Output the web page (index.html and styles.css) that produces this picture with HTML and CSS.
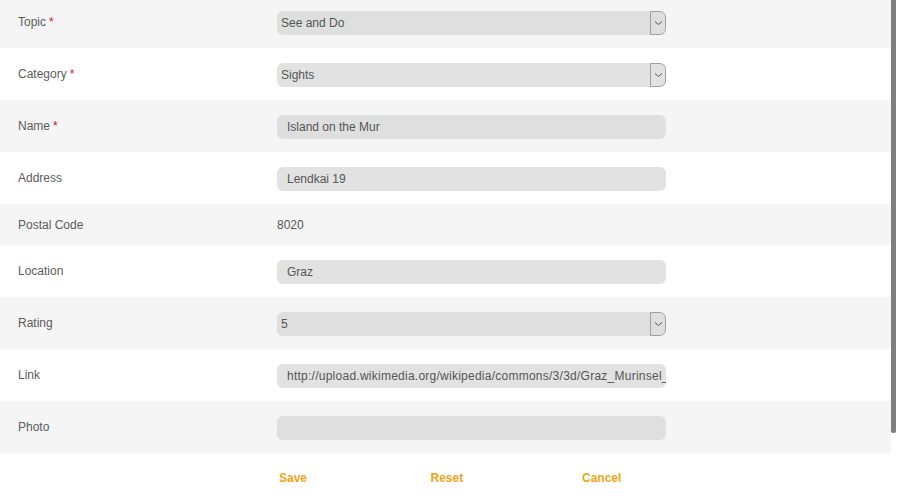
FILE: index.html
```html
<!DOCTYPE html>
<html>
<head>
<meta charset="utf-8">
<link rel="stylesheet" href="styles.css">
</head>
<body>
<div class="page">
  <form class="form">
    <div class="row alt first">
      <div class="label">Topic<span class="req">*</span></div>
      <div class="field select"><span class="val">See and Do</span><span class="arrow"><svg width="9" height="6" viewBox="0 0 9 6"><path d="M1 1.5 L4.5 4.5 L8 1.5" fill="none" stroke="#555" stroke-width="1"/></svg></span></div>
    </div>
    <div class="row">
      <div class="label">Category<span class="req">*</span></div>
      <div class="field select"><span class="val">Sights</span><span class="arrow"><svg width="9" height="6" viewBox="0 0 9 6"><path d="M1 1.5 L4.5 4.5 L8 1.5" fill="none" stroke="#555" stroke-width="1"/></svg></span></div>
    </div>
    <div class="row alt">
      <div class="label">Name<span class="req">*</span></div>
      <div class="field"><span class="val">Island on the Mur</span></div>
    </div>
    <div class="row">
      <div class="label">Address</div>
      <div class="field"><span class="val">Lendkai 19</span></div>
    </div>
    <div class="row alt short">
      <div class="label">Postal Code</div>
      <div class="plain">8020</div>
    </div>
    <div class="row">
      <div class="label">Location</div>
      <div class="field"><span class="val">Graz</span></div>
    </div>
    <div class="row alt">
      <div class="label">Rating</div>
      <div class="field select"><span class="val">5</span><span class="arrow"><svg width="9" height="6" viewBox="0 0 9 6"><path d="M1 1.5 L4.5 4.5 L8 1.5" fill="none" stroke="#555" stroke-width="1"/></svg></span></div>
    </div>
    <div class="row">
      <div class="label">Link</div>
      <div class="field"><span class="val clip">http://upload.wikimedia.org/wikipedia/commons/3/3d/Graz_Murinsel_1.jpg</span></div>
    </div>
    <div class="row alt">
      <div class="label">Photo</div>
      <div class="field"></div>
    </div>
    <div class="buttons">
      <span class="btn">Save</span>
      <span class="btn">Reset</span>
      <span class="btn">Cancel</span>
    </div>
  </form>
  <div class="scrollbar"></div>
</div>
</body>
</html>
```
FILE: styles.css
```css
html, body {
  margin: 0;
  padding: 0;
  background: #ffffff;
  overflow: hidden;
}
body {
  font-family: "Liberation Sans", Arial, sans-serif;
  font-size: 12px;
  color: #555555;
}
.page {
  position: relative;
  width: 898px;
  height: 498px;
  overflow: hidden;
}
.form {
  width: 891px;
  margin-top: -4px;
  display: flex;
  flex-direction: column;
}
.row {
  height: 52px;
  display: flex;
  align-items: center;
  background: #ffffff;
}
.row.alt {
  background: #f4f5f4;
}
.row.short {
  height: 41px;
}
.label {
  width: 259px;
  padding-left: 18px;
  color: #5c5c5c;
}
.req {
  color: #e0101a;
  margin-left: 3px;
}
.field {
  width: 389px;
  height: 24px;
  margin-top: 2px;
  box-sizing: border-box;
  border-radius: 6px;
  background: #e2e2e2;
  display: flex;
  align-items: center;
  padding-left: 10px;
  overflow: hidden;
}
.row.alt .field {
  background: #dfdfdf;
}
.val {
  color: #555555;
  white-space: nowrap;
}
.select .val {
  flex: 1;
  margin-left: -6px;
}
.arrow {
  width: 16px;
  height: 24px;
  box-sizing: border-box;
  border: 1px solid #a0a0a0;
  border-radius: 0 6px 6px 0;
  display: flex;
  align-items: center;
  justify-content: center;
}
.plain {
  color: #555555;
}
.clip {
  overflow: hidden;
  letter-spacing: 0.25px;
}
.buttons {
  display: flex;
  padding-left: 279px;
  height: 50px;
  align-items: center;
}
.btn {
  width: 151.5px;
  color: #f0a416;
  font-weight: bold;
}
.scrollbar {
  position: absolute;
  left: 891px;
  top: 0;
  width: 5px;
  height: 433px;
  background: #7f7f7f;
  border-radius: 0 0 2px 2px;
}
```
